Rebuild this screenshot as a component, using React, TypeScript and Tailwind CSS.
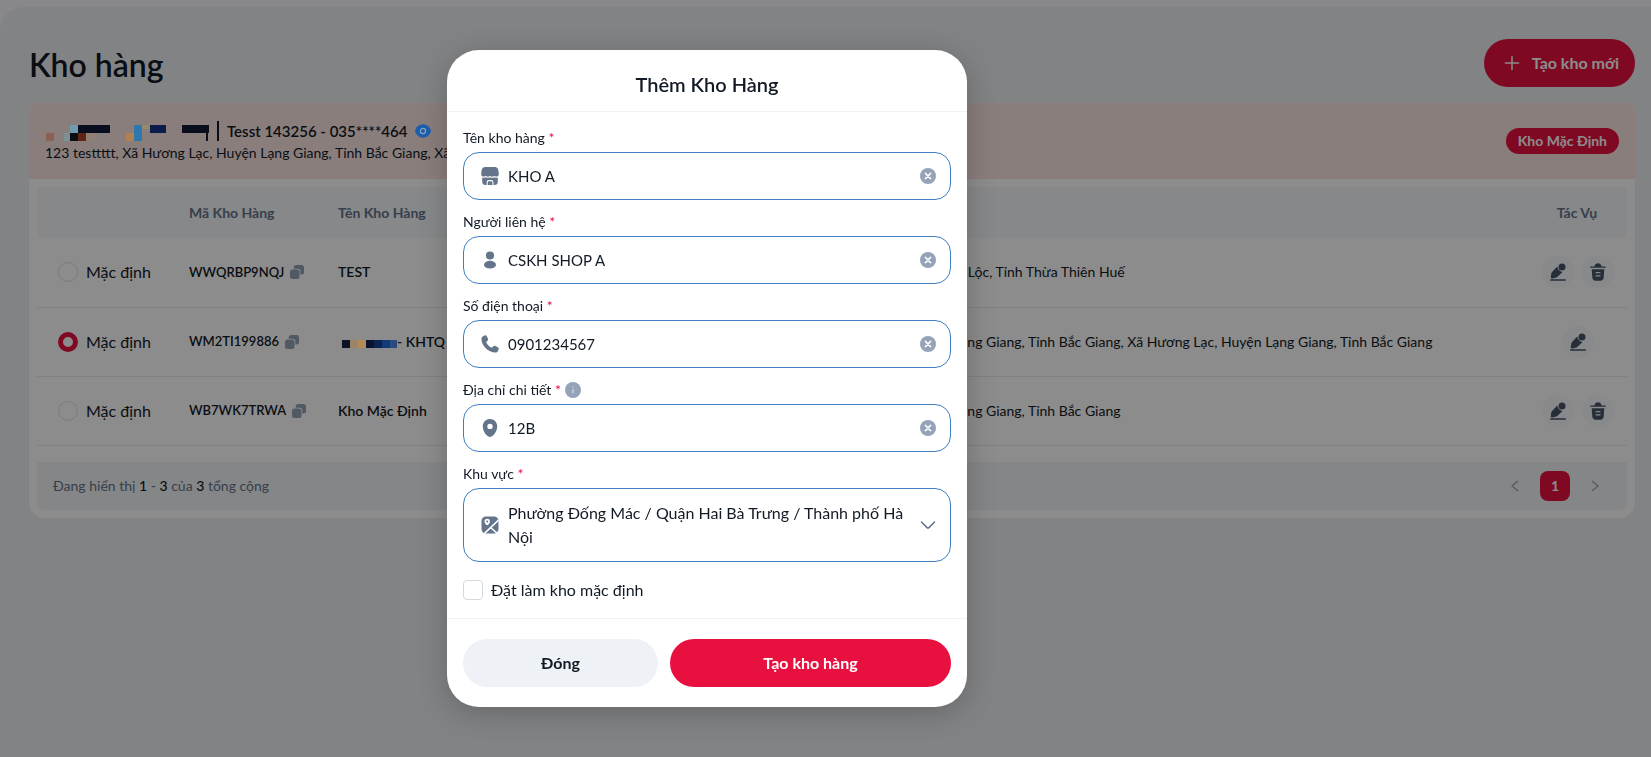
import { useState } from 'react';
import type { ReactNode } from 'react';

const ADDRESS = '123 testtttt, Xã Hương Lạc, Huyện Lạng Giang, Tỉnh Bắc Giang';
const FULL_ADDRESS = `${ADDRESS}, Xã Hương Lạc, Huyện Lạng Giang, Tỉnh Bắc Giang`;

function StoreIcon() {
  return (
    <svg viewBox="0 0 18 18" className="size-[18px] shrink-0" fill="#64748b" aria-hidden="true">
      <path d="M4 0h10a3.200 3.200 0 0 1 3.200 2.600l.6 3.900A2.600 2.600 0 0 1 15.300 9.600a2.700 2.700 0 0 1-2.100-.9 2.700 2.700 0 0 1-4.200 0 2.700 2.700 0 0 1-4.200 0 2.700 2.700 0 0 1-2.100.9A2.600 2.600 0 0 1 .2 6.500l.6-3.900A3.200 3.200 0 0 1 4 0z" />
      <path d="M1.200 10.400a4 4 0 0 0 3.600-.2 4 4 0 0 0 4.200 0 4 4 0 0 0 4.200 0 4 4 0 0 0 3.600.2V14.500a3.500 3.500 0 0 1-3.500 3.500h-.8v-2.600A2.400 2.400 0 0 0 10.100 13H8a2.400 2.400 0 0 0-2.400 2.400V18h-.9a3.500 3.500 0 0 1-3.500-3.500z" />
      <path d="M6.700 18v-2.500A1.300 1.300 0 0 1 8 14.200h2.100a1.300 1.300 0 0 1 1.300 1.300V18z" />
    </svg>
  );
}

function UserIcon() {
  return (
    <svg viewBox="0 0 18 18" className="size-[18px] shrink-0" fill="#64748b" aria-hidden="true">
      <circle cx="9" cy="4.500" r="4.100" />
      <ellipse cx="9" cy="13.700" rx="6" ry="3.900" />
    </svg>
  );
}

function PhoneIcon() {
  return (
    <svg viewBox="0 0 18 18" className="size-[18px] shrink-0" fill="#64748b" aria-hidden="true">
      <path d="M2.100 1.300 3.600.5C4.500.1 5.300.3 5.800 1.200l1.100 2.300c.4.900.2 1.600-.4 2.200l-.9.900c-.3.400-.3.700-.1 1.100 1 2.100 2.600 3.700 4.700 4.800.4.200.8.100 1.100-.2l.9-.9c.6-.6 1.400-.8 2.200-.4l2.400 1.200c.9.500 1.200 1.300.8 2.200l-.7 1.500c-.5 1-1.400 1.700-2.500 1.700C7.200 17.500.6 11 .4 3.800c0-1.100.700-2 1.700-2.500z" />
    </svg>
  );
}

function PinIcon() {
  return (
    <svg viewBox="0 0 18 18" className="size-[18px] shrink-0" fill="#64748b" aria-hidden="true">
      <path fillRule="evenodd" d="M9 0c4.100 0 7.200 3.200 7.200 7.200 0 4.300-2.600 8.600-5.600 10.300-1 .6-2.200.6-3.200 0C4.400 15.800 1.800 11.500 1.800 7.200 1.800 3.200 4.900 0 9 0zm0 4.700a2.700 2.700 0 1 0 0 5.400 2.700 2.700 0 0 0 0-5.400z" />
    </svg>
  );
}

function MapIcon() {
  return (
    <svg viewBox="0 0 18 18" className="size-[18px] shrink-0" aria-hidden="true">
      <rect x=".5" y=".5" width="17" height="17" rx="4.500" fill="#64748b" />
      <path d="M17.500 4.200 3 17.800M9.500 11.500l7 6" stroke="#fff" strokeWidth="1.600" fill="none" />
      <path fillRule="evenodd" fill="#fff" d="M6.200 2.800a2.700 2.700 0 0 1 2.700 2.800c0 1.700-1.300 3.300-2.700 3.700-1.400-.4-2.700-2-2.700-3.700a2.700 2.700 0 0 1 2.700-2.800zm0 1.800a1 1 0 1 0 0 2 1 1 0 0 0 0-2z" />
    </svg>
  );
}

function ClearIcon() {
  return (
    <svg viewBox="0 0 16 16" className="size-4" aria-hidden="true">
      <circle cx="8" cy="8" r="8" fill="#94a3b8" />
      <path d="m5.400 5.400 5.200 5.200m0-5.200-5.200 5.200" stroke="#fff" strokeWidth="1.500" strokeLinecap="round" />
    </svg>
  );
}

function CopyIcon() {
  return (
    <svg viewBox="0 0 14 14" className="size-[14px]" aria-hidden="true">
      <path d="M6 0h5.500A2.500 2.500 0 0 1 14 2.500V7a2.500 2.500 0 0 1-2.500 2.500H10.300V6.200a2.500 2.500 0 0 0-2.500-2.500H3.700V2.500A2.400 2.400 0 0 1 6 0z" fill="#94a3b8" />
      <rect x="0" y="4.500" width="9.500" height="9.500" rx="2.500" fill="#94a3b8" />
    </svg>
  );
}

function EditIcon() {
  return (
    <svg viewBox="0 0 18 18" className="size-[18px]" fill="#475569" aria-hidden="true">
      <circle cx="13" cy="4" r="3.500" />
      <path d="M8.200 3.600c.6 3 2.500 4.900 5.200 5.600L8.200 14c-.4.400-.9.700-1.500.8l-3.500.7c-.9.200-1.600-.5-1.400-1.400l.5-3.600c.1-.6.400-1.100.8-1.500z" />
      <rect x="1" y="16.300" width="16" height="1.400" rx=".7" />
    </svg>
  );
}

function TrashIcon() {
  return (
    <svg viewBox="0 0 18 18" className="size-[18px]" aria-hidden="true">
      <path d="M1.800 3.400h3.600C5.900 1.300 7.200.3 9 .3s3.100 1 3.600 3.100h3.600c1 .1 1 1.300 0 1.400H1.800c-1-.1-1-1.300 0-1.400z" fill="#475569" />
      <path d="M2.700 6.200h12.600l-.6 8.400c-.2 2-1.200 3.100-3.200 3.100h-5c-2 0-3-1.100-3.200-3.100z" fill="#475569" />
      <path d="M6.600 9.700h4.800M6.600 12.900h4.800" stroke="#f1f5f9" strokeWidth="1.300" />
    </svg>
  );
}

function EyeIcon() {
  return (
    <svg viewBox="0 0 16 14" className="relative z-20 h-[14px] w-4" aria-hidden="true">
      <path d="M8 .3c3.600 0 6.200 2.200 7.600 5.200.4 1 .4 2 0 3-1.400 3-4 5.200-7.600 5.200S1.800 11.500.4 8.500c-.4-1-.4-2 0-3C1.800 2.500 4.400.3 8 .3z" fill="#1c5fae" />
      <circle cx="8" cy="7" r="2.600" fill="none" stroke="#8ea3bd" strokeWidth="1.200" />
    </svg>
  );
}

function MaskedCompany() {
  return (
    <svg viewBox="0 0 164 16" className="relative z-20 h-4 w-[164px]" shapeRendering="crispEdges" aria-hidden="true">
      <rect x="1" y="8" width="8" height="8" fill="#8a6252" />
      <rect x="19" y="8" width="6" height="8" fill="#7f8f96" />
      <rect x="25" y="0" width="8" height="8" fill="#6f9bac" />
      <rect x="33" y="0" width="32" height="8" fill="#090e1e" />
      <rect x="25" y="8" width="8" height="8" fill="#0a0d14" />
      <rect x="33" y="8" width="8" height="8" fill="#5e2417" />
      <rect x="41" y="8" width="8" height="8" fill="#908072" />
      <rect x="81" y="8" width="8" height="8" fill="#b08050" />
      <rect x="89" y="0" width="8" height="16" fill="#2f78ab" />
      <rect x="97" y="0" width="8" height="4" fill="#968a6c" />
      <rect x="105" y="0" width="16" height="8" fill="#0b1c4a" />
      <rect x="137" y="0" width="28" height="8" fill="#090d1c" />
      <rect x="161" y="8" width="2" height="8" fill="#090d1c" />
    </svg>
  );
}

function MaskedName() {
  return (
    <svg viewBox="0 0 59 8" className="relative z-20 h-2 w-[59px] shrink-0" shapeRendering="crispEdges" aria-hidden="true">
      <rect x="4" y="0" width="8" height="8" fill="#0d1226" />
      <rect x="12" y="0" width="8" height="8" fill="#9c8468" />
      <rect x="20" y="0" width="8" height="8" fill="#b08c58" />
      <rect x="28" y="0" width="8" height="8" fill="#0a1430" />
      <rect x="36" y="0" width="8" height="8" fill="#0d2350" />
      <rect x="44" y="0" width="8" height="8" fill="#123a78" />
      <rect x="52" y="0" width="7" height="8" fill="#2c4a80" />
    </svg>
  );
}

type Warehouse = { code: string; name: ReactNode; address: string; removable: boolean };

const warehouses: Warehouse[] = [
  { code: 'WWQRBP9NQJ', name: 'TEST', address: 'Test 12, Thị trấn Phú Lộc, Huyện Phú Lộc, Tỉnh Thừa Thiên Huế', removable: true },
  { code: 'WM2TI199886', name: <span className="flex items-center"><span className="pt-1"><MaskedName /></span>- KHTQ -</span>, address: FULL_ADDRESS, removable: false },
  { code: 'WB7WK7TRWA', name: 'Kho Mặc Định', address: ADDRESS, removable: true },
];

function WarehouseTable() {
  const [selected, setSelected] = useState('WM2TI199886');
  return (
    <table className="w-full table-fixed text-left">
      <colgroup>
        <col className="w-[140px]" />
        <col className="w-[149px]" />
        <col className="w-[400px]" />
        <col />
        <col className="w-[100px]" />
      </colgroup>
      <thead>
        <tr className="h-[51px] bg-[#f5f7f9] text-sm text-[#64748b]">
          <th aria-label="Mặc định" />
          <th className="px-3 font-bold">Mã Kho Hàng</th>
          <th className="px-3 font-bold">Tên Kho Hàng</th>
          <th className="px-3 font-bold" aria-label="Địa Chỉ" />
          <th className="text-center font-bold">Tác Vụ</th>
        </tr>
      </thead>
      <tbody>
        {warehouses.map((w) => (
          <tr key={w.code} className="h-[69px] border-b border-[#eaecef] text-sm">
            <td className="pl-[21px]">
              <label className="flex items-center gap-2 text-base">
                <input
                  type="radio"
                  name="default-warehouse"
                  checked={selected === w.code}
                  onChange={() => setSelected(w.code)}
                  className="size-5 appearance-none rounded-full border border-[#dcdfe4] checked:border-5 checked:border-[#e8103f]"
                />
                Mặc định
              </label>
            </td>
            <td className="px-3 text-[13px] font-semibold">
              <span className="flex items-center gap-[6px]">
                {w.code}
                <button type="button" aria-label={`Sao chép ${w.code}`}><CopyIcon /></button>
              </span>
            </td>
            <td className="truncate px-3 font-semibold">{w.name}</td>
            <td className="px-3 whitespace-nowrap">{w.address}</td>
            <td>
              <div className="flex justify-center gap-2 pl-0.5">
                <button type="button" aria-label={`Sửa ${w.code}`} className="flex size-8 items-center justify-center rounded-full bg-[#f8fafc]"><EditIcon /></button>
                {w.removable && (
                  <button type="button" aria-label={`Xóa ${w.code}`} className="flex size-8 items-center justify-center rounded-full bg-[#f8fafc]"><TrashIcon /></button>
                )}
              </div>
            </td>
          </tr>
        ))}
      </tbody>
    </table>
  );
}

type FieldProps = { id: string; label: string; initial: string; icon: ReactNode; info?: boolean };

function Field({ id, label, initial, icon, info }: FieldProps) {
  const [value, setValue] = useState(initial);
  return (
    <div className="flex flex-col gap-1">
      <div className="flex h-5 items-center gap-1 text-sm">
        <label htmlFor={id}>{label} <span className="text-[#e8103f]">*</span></label>
        {info && (
          <svg viewBox="0 0 16 16" className="size-4" aria-hidden="true">
            <circle cx="8" cy="8" r="8" fill="#94a3b8" />
            <path d="M8 7.200v4M8 4.600v1" stroke="#dbe2ea" strokeWidth="1.200" />
          </svg>
        )}
      </div>
      <div className="flex h-12 items-center gap-[9px] rounded-2xl border border-[#3f7fc1] pr-[14px] pl-[17px]">
        {icon}
        <input id={id} value={value} onChange={(e) => setValue(e.target.value)} className="min-w-0 flex-1 text-[15px] outline-none" />
        <button type="button" aria-label={`Xóa ${label}`} onClick={() => setValue('')}><ClearIcon /></button>
      </div>
    </div>
  );
}

function DialogPanel() {
  return (
    <form
      role="dialog"
      aria-labelledby="dialog-title"
      onSubmit={(e) => e.preventDefault()}
      className="w-full max-w-[520px] rounded-[32px] bg-white shadow-[0_6px_30px_rgba(0,0,0,0.22)]"
    >
      <header className="flex h-[62px] items-center justify-center border-b border-[#f1f3f5] pt-[6px]">
        <h2 id="dialog-title" className="text-xl font-semibold">Thêm Kho Hàng</h2>
      </header>
      <div className="flex flex-col gap-3 px-4 pt-4 pb-4">
        <Field id="warehouse-name" label="Tên kho hàng" initial="KHO A" icon={<StoreIcon />} />
        <Field id="contact" label="Người liên hệ" initial="CSKH SHOP A" icon={<UserIcon />} />
        <Field id="phone" label="Số điện thoại" initial="0901234567" icon={<PhoneIcon />} />
        <Field id="address" label="Địa chỉ chi tiết" initial="12B" icon={<PinIcon />} info />
        <div className="flex flex-col gap-1">
          <label htmlFor="area" className="h-5 text-sm">Khu vực <span className="text-[#e8103f]">*</span></label>
          <div className="relative flex items-center gap-[9px] rounded-2xl border border-[#3f7fc1] py-3 pr-[14px] pl-[17px]">
            <MapIcon />
            <span className="flex-1 text-base">Phường Đống Mác / Quận Hai Bà Trưng / Thành phố Hà Nội</span>
            <svg viewBox="0 0 16 16" className="size-4 shrink-0" fill="none" stroke="#64748b" strokeWidth="1.500" strokeLinecap="round" strokeLinejoin="round" aria-hidden="true">
              <path d="m1.500 5 5.300 5.400a1.700 1.700 0 0 0 2.400 0L14.500 5" />
            </svg>
            <select id="area" className="absolute inset-0 h-full w-full opacity-0">
              <option>Phường Đống Mác / Quận Hai Bà Trưng / Thành phố Hà Nội</option>
            </select>
          </div>
        </div>
        <label className="mt-1 flex h-6 items-center gap-2 text-base">
          <input type="checkbox" className="size-5 appearance-none rounded border border-[#d5d9df] checked:bg-[#e8103f]" />
          Đặt làm kho mặc định
        </label>
      </div>
      <footer className="grid grid-cols-[195fr_281fr] gap-3 border-t border-[#f1f3f5] px-4 py-5">
        <button type="button" className="h-12 rounded-full bg-[#eef2f6] font-bold">Đóng</button>
        <button type="submit" className="h-12 rounded-full bg-[#e8103f] font-bold text-white">Tạo kho hàng</button>
      </footer>
    </form>
  );
}

export default function App() {
  return (
    <div className="min-h-screen overflow-hidden bg-[#f7f7fb] pt-[7px] font-['Lato','Noto_Sans',sans-serif] text-[#121a26]">
      <main className="min-h-screen rounded-tl-[24px] bg-[#edeef2] px-4 pt-8 pl-[29px]">
        <div className="flex h-12 items-center justify-between">
          <h1 className="pt-1 text-[32px] font-semibold">Kho hàng</h1>
          <button type="button" className="flex h-12 items-center gap-3 rounded-full bg-[#e8103f] pr-4 pl-5 font-bold text-white">
            <svg viewBox="0 0 16 16" className="size-4" stroke="currentColor" strokeWidth="1.500" strokeLinecap="round" aria-hidden="true">
              <path d="M8 1.500v13M1.500 8h13" />
            </svg>
            Tạo kho mới
          </button>
        </div>
        <section className="mt-4 overflow-hidden rounded-t-lg rounded-b-2xl bg-white">
          <div className="flex h-[76px] items-center justify-between bg-[#fbe5e4] px-4">
            <div>
              <div className="flex h-6 items-center gap-2 text-[15px] font-bold">
                <span className="pt-1"><MaskedCompany /></span>
                <span className="h-5 w-[2px] bg-[#121a26]" />
                <span className="font-semibold">Tesst 143256 - 035****464</span>
                <button type="button" aria-label="Hiện số điện thoại"><EyeIcon /></button>
              </div>
              <p className="text-sm">{FULL_ADDRESS}</p>
            </div>
            <span className="rounded-full bg-[#e8103f] px-3 py-[3px] text-sm font-bold text-white">Kho Mặc Định</span>
          </div>
          <div className="p-2">
            <WarehouseTable />
            <div className="mt-4 flex h-12 items-center justify-between rounded-b-lg bg-[#f3f4f7] px-4 text-sm text-[#64748b]">
              <p>
                Đang hiển thị <b className="font-medium text-[#121a26]">1</b> - <b className="font-medium text-[#121a26]">3</b> của{' '}
                <b className="font-medium text-[#121a26]">3</b> tổng cộng
              </p>
              <nav className="flex items-center gap-[19px] pr-[10px]">
                <button type="button" aria-label="Trang trước">
                  <svg viewBox="0 0 12 12" className="size-3" fill="none" stroke="#94a3b8" strokeWidth="1.200" aria-hidden="true"><path d="M9 1 3 6l6 5" /></svg>
                </button>
                <button type="button" aria-current="page" className="size-[30px] rounded-lg bg-[#e8103f] font-bold text-white">1</button>
                <button type="button" aria-label="Trang sau">
                  <svg viewBox="0 0 12 12" className="size-3" fill="none" stroke="#94a3b8" strokeWidth="1.200" aria-hidden="true"><path d="m3 1 6 5-6 5" /></svg>
                </button>
              </nav>
            </div>
          </div>
        </section>
      </main>
      <div className="fixed inset-0 z-10 bg-black/45" />
      <div className="fixed inset-0 z-30 flex items-start justify-center pt-[50px] pr-[237px]">
        <DialogPanel />
      </div>
    </div>
  );
}
